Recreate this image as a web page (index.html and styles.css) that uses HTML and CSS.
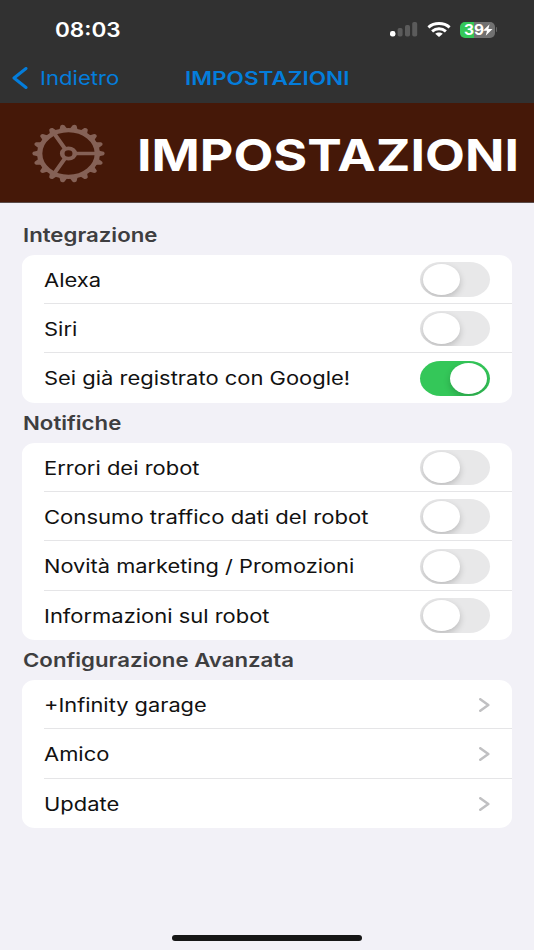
FILE: index.html
```html
<!DOCTYPE html>
<html lang="it">
<head>
<meta charset="utf-8">
<title>Impostazioni</title>
<link rel="stylesheet" href="styles.css">
</head>
<body>
<div class="screen">
  <header class="top">
    <div class="status">
      <span class="wide time">08:03</span>
      <div class="indicators">
        <svg class="signal" viewBox="0 0 28 15">
          <rect x="0" y="9" width="5.4" height="5.5" rx="2.2" fill="#fff"/>
          <rect x="7.6" y="6" width="5" height="8.5" rx="1.8" fill="#5b5b5b"/>
          <rect x="15" y="3" width="5" height="11.5" rx="1.8" fill="#5b5b5b"/>
          <rect x="22.2" y="0" width="5" height="14.5" rx="1.8" fill="#5b5b5b"/>
        </svg>
        <svg class="wifi" viewBox="0 0 24 15">
          <g fill="none" stroke="#fff" stroke-width="3">
            <path d="M1.400 5.300C7.200.3 16.800.3 22.600 5.300"/>
            <path d="M5.100 9.300C9.200 5.900 14.800 5.900 18.900 9.300"/>
          </g>
          <path fill="#fff" d="M8.200 11.800C10.300 10 13.700 10 15.800 11.800L12 14.900Z"/>
        </svg>
        <div class="battery">
          <div class="cell"><span class="wide level">39</span>
            <svg class="bolt" viewBox="0 0 9 11"><path fill="#fff" d="M6.200 0L0 6.200H3.800L2.600 11L9 4.600H5.100Z"/></svg>
          </div>
          <i class="tip"></i>
        </div>
      </div>
    </div>
    <nav class="nav">
      <svg class="back" viewBox="0 0 16 22"><path d="M14 1.500L2 11L14 20.500" fill="none" stroke="#047ddb" stroke-width="3" stroke-linecap="round" stroke-linejoin="round"/></svg>
      <span class="wide back-label">Indietro</span>
      <span class="wide nav-title">IMPOSTAZIONI</span>
    </nav>
  </header>
  <div class="banner">
    <svg class="gear" viewBox="-36 -36 72 72" preserveAspectRatio="none">
      <defs><path id="t" d="M29-4.400L31.500-3.200L34.700-2Q36.600 0 34.700 2L31.500 3.200L29 4.400Z"/></defs>
      <g fill="#856156">
        <use href="#t"/><use href="#t" transform="rotate(20)"/><use href="#t" transform="rotate(40)"/>
        <use href="#t" transform="rotate(60)"/><use href="#t" transform="rotate(80)"/><use href="#t" transform="rotate(100)"/>
        <use href="#t" transform="rotate(120)"/><use href="#t" transform="rotate(140)"/><use href="#t" transform="rotate(160)"/>
        <use href="#t" transform="rotate(180)"/><use href="#t" transform="rotate(200)"/><use href="#t" transform="rotate(220)"/>
        <use href="#t" transform="rotate(240)"/><use href="#t" transform="rotate(260)"/><use href="#t" transform="rotate(280)"/>
        <use href="#t" transform="rotate(300)"/><use href="#t" transform="rotate(320)"/><use href="#t" transform="rotate(340)"/>
      </g>
      <g fill="none" stroke="#856156">
        <circle r="28.400" stroke-width="5.200"/>
        <circle r="6.200" stroke-width="4.600"/>
        <path stroke-width="4.200" d="M7 0H27M-3.500-6.060L-13.500-23.400M-3.500 6.060L-13.500 23.400"/>
      </g>
    </svg>
    <h1 class="wide">IMPOSTAZIONI</h1>
  </div>
  <main>
    <section>
      <h2><span class="wide">Integrazione</span></h2>
      <div class="card">
        <div class="row"><span class="wide">Alexa</span><i class="switch"></i></div>
        <div class="row"><span class="wide">Siri</span><i class="switch"></i></div>
        <div class="row"><span class="wide">Sei già registrato con Google!</span><i class="switch on"></i></div>
      </div>
    </section>
    <section>
      <h2><span class="wide">Notifiche</span></h2>
      <div class="card">
        <div class="row"><span class="wide">Errori dei robot</span><i class="switch"></i></div>
        <div class="row"><span class="wide traffic">Consumo traffico dati del robot</span><i class="switch"></i></div>
        <div class="row"><span class="wide news">Novità marketing / Promozioni</span><i class="switch"></i></div>
        <div class="row"><span class="wide">Informazioni sul robot</span><i class="switch"></i></div>
      </div>
    </section>
    <section>
      <h2><span class="wide">Configurazione Avanzata</span></h2>
      <div class="card">
        <div class="row"><span class="wide news">+Infinity garage</span><svg class="chev" viewBox="0 0 11 14"><path d="M1.300 1.200L9.300 7L1.300 12.800"/></svg></div>
        <div class="row"><span class="wide">Amico</span><svg class="chev" viewBox="0 0 11 14"><path d="M1.300 1.200L9.300 7L1.300 12.800"/></svg></div>
        <div class="row"><span class="wide">Update</span><svg class="chev" viewBox="0 0 11 14"><path d="M1.300 1.200L9.300 7L1.300 12.800"/></svg></div>
      </div>
    </section>
  </main>
  <div class="home"></div>
</div>
</body>
</html>
```
FILE: styles.css
```css
* { box-sizing: border-box; }
body { margin: 0; font-family: Inter, "Liberation Sans", sans-serif; background: #f2f1f7; }
.screen { width: 534px; height: 950px; display: flex; flex-direction: column; overflow: hidden; }
h1, h2 { margin: 0; }
.wide { display: inline-block; white-space: nowrap; transform: scaleX(var(--sx, 1.186)); transform-origin: 0 50%; }

.top { height: 102.5px; background: #313131; flex: none; }
.status { height: 59px; padding: 0 37px 0 54.500px; display: flex; justify-content: space-between; align-items: center; }
.time { --sx: 1.155; color: #fff; font-size: 19.500px; font-weight: 600; }
.indicators { display: flex; align-items: center; }
.signal { width: 28px; height: 15px; margin-right: 9px; }
.wifi { width: 24px; height: 15px; margin-right: 9px; }
.battery { display: flex; align-items: center; }
.cell { width: 35px; height: 16px; border-radius: 5px; display: flex; align-items: center; padding-left: 4px; background: linear-gradient(90deg, #34c759 39%, #717171 39%); }
.level { --sx: 1.1; color: #fff; font-size: 14px; font-weight: 700; line-height: 16px; width: 19.500px; }
.bolt { width: 9.500px; height: 12px; }
.tip { width: 1.500px; height: 5px; margin-left: 1px; background: #666; border-radius: 0 2px 2px 0; }

.nav { height: 38px; padding-left: 12px; display: flex; align-items: center; color: #047ddb; }
.back { width: 16px; height: 22px; }
.back-label { --sx: 1.165; margin-left: 12px; width: 145px; font-size: 19px; }
.nav-title { font-size: 19px; font-weight: 600; }

.banner { height: 100px; flex: none; padding: 2px 0 0 32px; display: flex; align-items: center; background: #451808; border-bottom: 1px solid #5b4c4a; }
.gear { width: 73px; height: 59px; margin-right: 32px; flex: none; }
h1 { --sx: 1.178; color: #fff; font-size: 44px; line-height: 50px; font-weight: 700; padding-top: 3px; }

main { padding: 12.200px 22.200px 0 22.200px; flex: 1; }
h2 { --sx: 1.169; height: 40px; padding-left: .8px; font-size: 19px; font-weight: 600; line-height: 42px; color: #3e3e40; }
.card { background: #fff; border-radius: 13px / 11px; padding-left: 21.800px; }
.row { height: 49.350px; padding: 1.300px 22px 0 0; display: flex; align-items: center; justify-content: space-between; color: #111; font-size: 18.500px; }
.row .wide { margin-left: .4px; }
.traffic { --sx: 1.193; }
.news { --sx: 1.178; }
.row:not(:last-child) { border-bottom: 1px solid #e5e5e7; }
.row:last-child { padding-top: .6px; }
.switch { width: 70px; height: 35px; padding: 2px 3px; border-radius: 20.500px / 17.500px; background: #e8e8e9; display: flex; overflow: hidden; }
.switch::before { content: ""; width: 37px; height: 31px; border-radius: 50%; background: #fff; box-shadow: 0 3px 7px rgba(0, 0, 0, .2); }
.on { background: #34c759; justify-content: flex-end; }
.chev { width: 11px; height: 14px; }
.chev path { fill: none; stroke: #c0c0c2; stroke-width: 2.500; stroke-linecap: round; stroke-linejoin: round; }
.home { width: 190px; height: 6px; margin: 0 auto 9px 172px; border-radius: 3px; background: #161616; }
```
